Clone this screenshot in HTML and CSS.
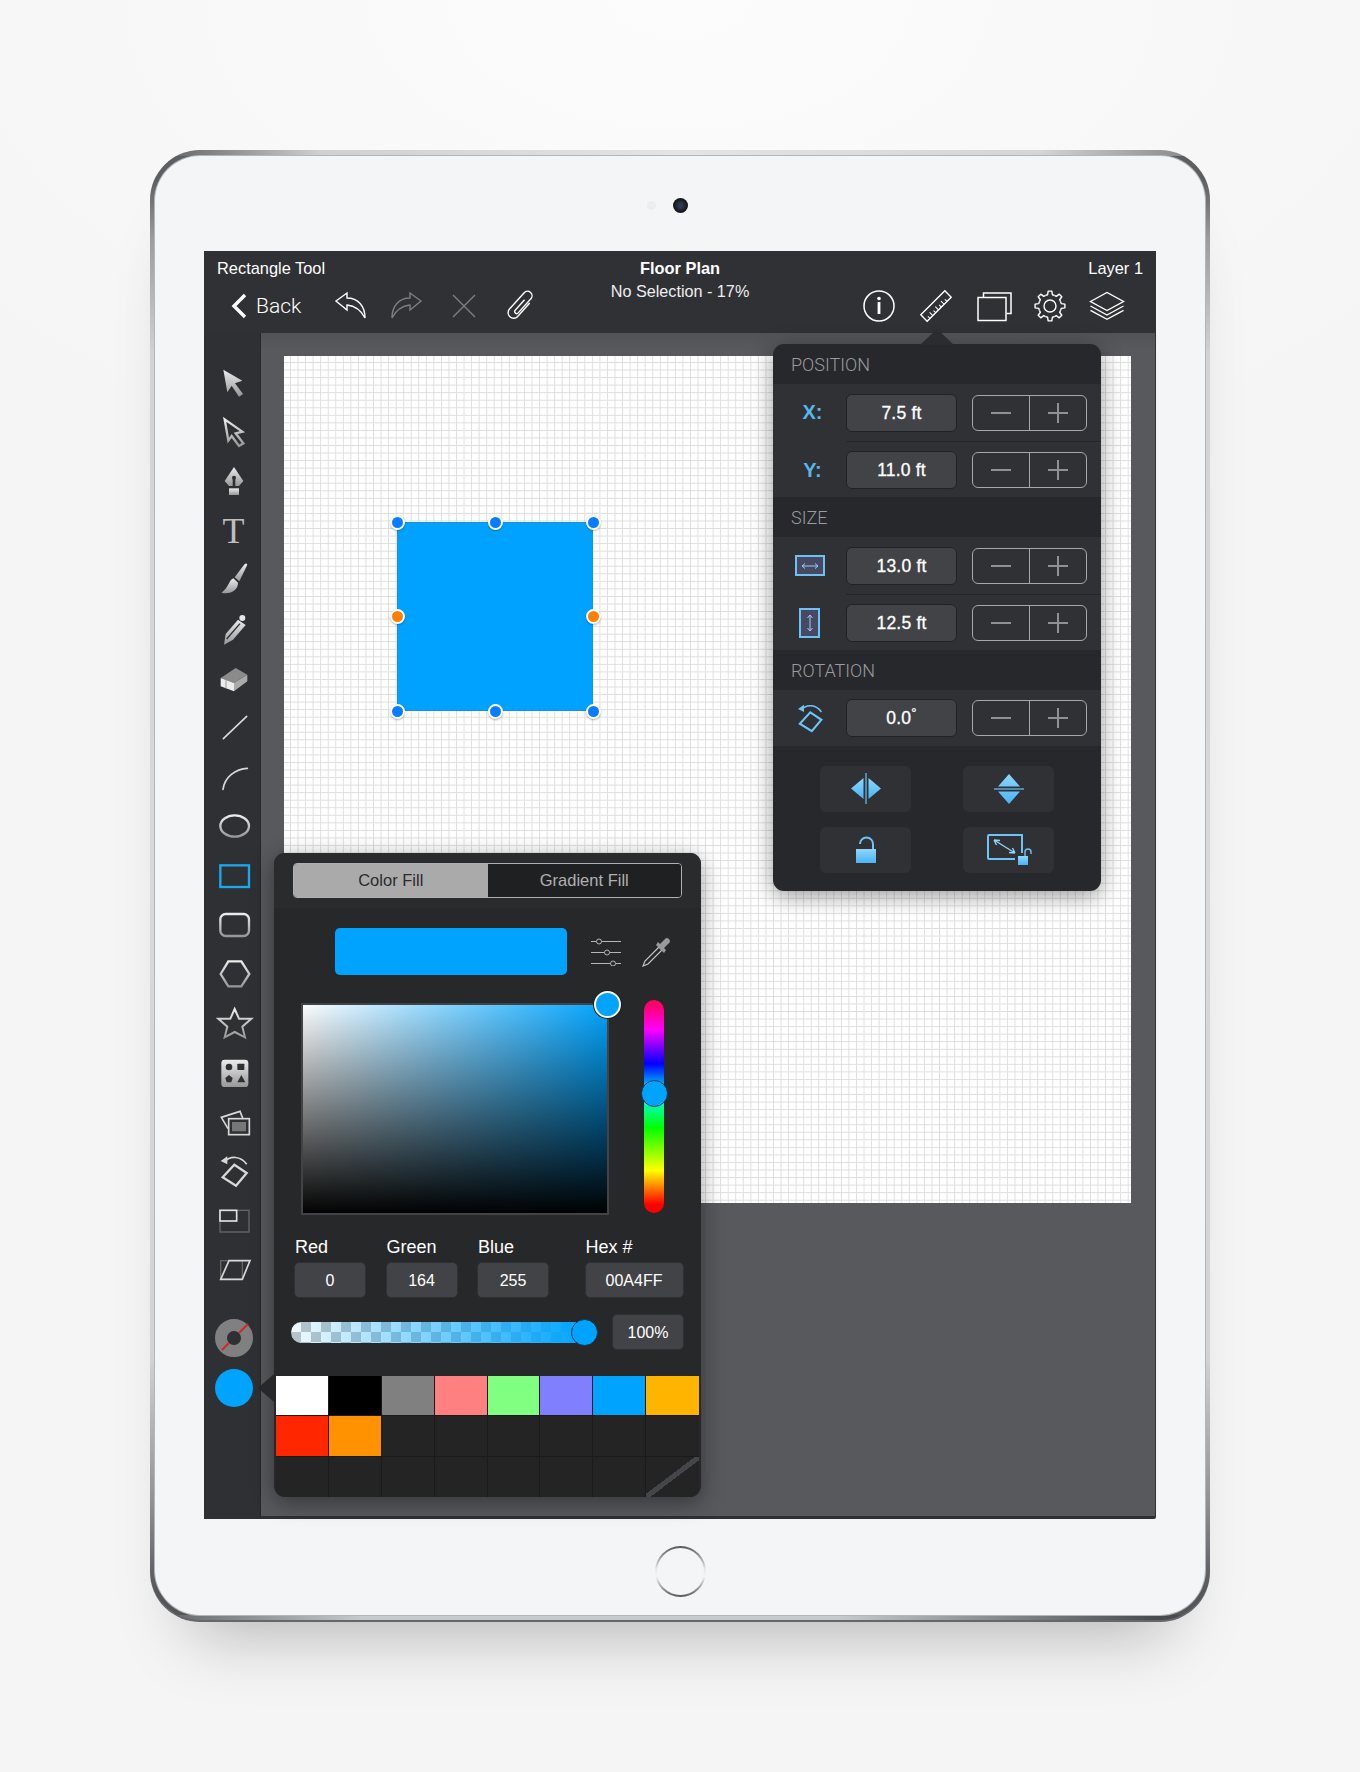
FILE: index.html
```html
<!DOCTYPE html>
<html lang="en">
<head>
    <meta charset="UTF-8">
    <title>Floor Plan</title>
    <link rel="stylesheet" href="styles.css">
</head>
<body>
    <svg class="defs" width="0" height="0">
        <defs>
            <linearGradient id="metal" x1="0" y1="0" x2="0" y2="1">
                <stop offset="0" stop-color="#ececec"/>
                <stop offset="1" stop-color="#979797"/>
            </linearGradient>
            <linearGradient id="sky" x1="0" y1="0" x2="0" y2="1">
                <stop offset="0" stop-color="#8ed6fb"/>
                <stop offset="1" stop-color="#49b4f5"/>
            </linearGradient>
            <symbol id="rotate-icon" viewBox="4 4 120 120">
                <path d="M65 45 L102 70 L70 108 L30 83 Z" fill="none" stroke="currentColor" stroke-width="7"/>
                <path d="M36 36 C52 18 84 18 102 44" fill="none" stroke="currentColor" stroke-width="5"/>
                <path d="M24 34 L44 20 L44 44 Z" fill="currentColor"/>
            </symbol>
            <path id="gear-tooth" d="M15.6 9.4 L17.6 8.75 L18.17 5.11 H21.83 L22.4 8.75 L24.4 9.4"/>
        </defs>
    </svg>

    <div class="tablet">
        <div class="tablet-face">
            <div class="camera-row">
                <span class="sensor"></span>
                <span class="camera"></span>
            </div>

            <div class="screen">
                <header class="topbar">
                    <div class="topbar-left">
                        <div class="bar-title">Rectangle Tool</div>
                        <div class="tools">
                            <button class="back">
                                <svg width="16" height="26" viewBox="0 0 16 26"><path d="M14 2 L3 13 L14 24" fill="none" stroke="#fff" stroke-width="3.4"/></svg>
                                <span>Back</span>
                            </button>
                            <span class="tool">
                                <svg width="40" height="40" viewBox="0 0 40 40"><path d="M6 15 L17 7 V12 C28 12 35 20 35 32 C31 24 26 20 17 19 V24 Z" fill="none" stroke="#fff" stroke-width="1.4"/></svg>
                            </span>
                            <span class="tool">
                                <svg width="40" height="40" viewBox="0 0 40 40"><path d="M34 15 L23 7 V12 C12 12 5 20 5 32 C9 24 14 20 23 19 V24 Z" fill="none" stroke="#7d7e82" stroke-width="1.4"/></svg>
                            </span>
                            <span class="tool">
                                <svg width="40" height="40" viewBox="0 0 40 40"><path d="M9 9 L31 31 M31 9 L9 31" stroke="#7d7e82" stroke-width="1.4"/></svg>
                            </span>
                            <span class="tool">
                                <svg width="40" height="40" viewBox="0 0 40 40"><path transform="rotate(42 20 20)" d="M24.5 12 V30 a5.5 5.5 0 0 1 -11 0 V8 a4.5 4.5 0 0 1 9 0 V27 a2 2 0 0 1 -4 0 V13" fill="none" stroke="#fff" stroke-width="1.4"/></svg>
                            </span>
                        </div>
                    </div>

                    <div class="topbar-center">
                        <div class="bar-title bold">Floor Plan</div>
                        <div class="subtitle">No Selection - 17%</div>
                    </div>

                    <div class="topbar-right">
                        <div class="bar-title">Layer 1</div>
                        <div class="tools right">
                            <span class="tool">
                                <svg width="40" height="40" viewBox="0 0 40 40"><circle cx="20" cy="20" r="15" fill="none" stroke="#fff" stroke-width="1.5"/><rect x="18.6" y="16" width="2.8" height="12" fill="#fff"/><circle cx="20" cy="12.5" r="1.8" fill="#fff"/></svg>
                            </span>
                            <span class="tool">
                                <svg width="40" height="40" viewBox="0 0 40 40"><g transform="rotate(-45 20 20)" fill="none" stroke="#fff" stroke-width="1.4"><rect x="3" y="15.5" width="34" height="9"/><path d="M7 24.5 v-3 M11 24.5 v-4.5 M15 24.5 v-3 M19 24.5 v-4.5 M23 24.5 v-3 M27 24.5 v-4.5 M31 24.5 v-3" stroke-width="1"/></g></svg>
                            </span>
                            <span class="tool">
                                <svg width="40" height="40" viewBox="0 0 40 40"><rect x="5" y="11.5" width="28" height="23" fill="none" stroke="#fff" stroke-width="1.5"/><path d="M10.5 11 V7 H38 V27.5 H33.5" fill="none" stroke="#fff" stroke-width="1.5"/></svg>
                            </span>
                            <span class="tool">
                                <svg width="40" height="40" viewBox="0 0 40 40"><g fill="none" stroke="#fff" stroke-width="1.4" stroke-linejoin="round"><use href="#gear-tooth"/><use href="#gear-tooth" transform="rotate(45 20 20)"/><use href="#gear-tooth" transform="rotate(90 20 20)"/><use href="#gear-tooth" transform="rotate(135 20 20)"/><use href="#gear-tooth" transform="rotate(180 20 20)"/><use href="#gear-tooth" transform="rotate(225 20 20)"/><use href="#gear-tooth" transform="rotate(270 20 20)"/><use href="#gear-tooth" transform="rotate(315 20 20)"/><circle cx="20" cy="20" r="6"/></g></svg>
                            </span>
                            <span class="tool">
                                <svg width="40" height="40" viewBox="0 0 40 40"><g fill="none" stroke="#fff" stroke-width="1.4"><path d="M3.5 15.5 L20 6.5 L36.5 15.5 L20 24.5 Z"/><path d="M3.5 20 L20 29 L36.5 20"/><path d="M3.5 24.3 L20 33.3 L36.5 24.3"/></g></svg>
                            </span>
                        </div>
                    </div>
                </header>

                <div class="workspace">
                    <aside class="sidebar">
                        <div class="side-tool"><svg viewBox="0 0 120 120"><path d="M28 20 L85 53 L63 61 L87 93 L75 101 L53 68 L40 88 Z" fill="url(#metal)"/></svg></div>
                        <div class="side-tool"><svg viewBox="0 0 120 120"><path d="M32 22 L85 59 L65 64 L88 94 L75 102 L53 72 L43 86 Z" fill="none" stroke="url(#metal)" stroke-width="7"/></svg></div>
                        <div class="side-tool"><svg viewBox="0 0 120 120"><g transform="translate(0 10)"><path d="M60 8 L88 50 L75 65 H64 V42 H56 V65 H45 L32 50 Z" fill="url(#metal)"/><circle cx="60" cy="40" r="6" fill="#2f3034"/><rect x="45" y="72" width="30" height="20" fill="url(#metal)"/></g></svg></div>
                        <div class="side-tool"><span class="type-icon">T</span></div>
                        <div class="side-tool"><svg viewBox="0 0 120 120"><path d="M58 55 C44 60 44 85 22 98 C50 105 72 90 72 68 Z" fill="url(#metal)"/><path d="M62 52 L92 12 Q98 8 100 14 L76 64 Z" fill="url(#metal)"/></svg></div>
                        <div class="side-tool"><svg viewBox="0 0 120 120"><path d="M30 107 L35 75 L72 32 L95 48 L57 92 Z" fill="url(#metal)"/><path d="M38 90 L78 44" stroke="#2f3034" stroke-width="4"/><circle cx="85" cy="27" r="9" fill="#e6e6e6"/></svg></div>
                        <div class="side-tool"><svg viewBox="0 0 120 120"><g transform="translate(0 5)"><path d="M20 55 L65 25 L100 45 L60 70 Z" fill="#8b8b8b"/><path d="M20 55 L60 70 V95 L20 80 Z" fill="#ececec"/><path d="M60 70 L100 45 V65 L60 95 Z" fill="#aaa"/><path d="M36 62 V86" stroke="#999" stroke-width="3"/></g></svg></div>
                        <div class="side-tool"><svg viewBox="0 0 120 120"><path d="M28 92 L98 25" stroke="#d8d8d8" stroke-width="5" stroke-linecap="round"/></svg></div>
                        <div class="side-tool"><svg viewBox="0 0 120 120"><path d="M27 97 C32 59 65 36 100 34" fill="none" stroke="#d8d8d8" stroke-width="5" stroke-linecap="round"/></svg></div>
                        <div class="side-tool"><svg viewBox="0 0 120 120"><ellipse cx="62" cy="60" rx="43" ry="32" fill="none" stroke="url(#metal)" stroke-width="7"/></svg></div>
                        <div class="side-tool"><svg viewBox="0 0 120 120"><rect x="19" y="28" width="86" height="65" fill="none" stroke="#19a9ee" stroke-width="7"/></svg></div>
                        <div class="side-tool"><svg viewBox="0 0 120 120"><rect x="19" y="27" width="86" height="66" rx="16" fill="none" stroke="url(#metal)" stroke-width="7"/></svg></div>
                        <div class="side-tool"><svg viewBox="0 0 120 120"><path d="M20 60 L43 22 H82 L106 60 L82 97 H43 Z" fill="none" stroke="url(#metal)" stroke-width="7"/></svg></div>
                        <div class="side-tool"><svg viewBox="0 0 120 120"><path d="M62 15 L75 44 L112 44 L85 68 L93 100 L62 84 L32 100 L40 68 L13 44 L49 44 Z" fill="none" stroke="url(#metal)" stroke-width="6"/></svg></div>
                        <div class="side-tool"><svg viewBox="0 0 120 120"><rect x="22" y="20" width="81" height="82" rx="10" fill="url(#metal)"/><circle cx="45" cy="42" r="10" fill="#2f3034"/><rect x="70" y="32" width="21" height="19" rx="2" fill="#2f3034"/><path d="M45 66 L56 75 L52 88 H38 L34 75 Z" fill="#2f3034"/><path d="M82 66 L94 88 H70 Z" fill="#2f3034"/></svg></div>
                        <div class="side-tool"><svg viewBox="0 0 120 120"><path d="M42 80 L22 46 L78 28 L86 48" fill="none" stroke="#d8d8d8" stroke-width="5"/><rect x="44" y="50" width="62" height="48" fill="none" stroke="#d8d8d8" stroke-width="5"/><rect x="54" y="60" width="42" height="28" fill="#777"/></svg></div>
                        <div class="side-tool metal-text"><svg viewBox="0 0 120 120"><use href="#rotate-icon" width="120" height="120"/></svg></div>
                        <div class="side-tool"><svg viewBox="0 0 120 120"><rect x="18" y="28" width="87" height="65" fill="none" stroke="#666" stroke-width="4"/><rect x="18" y="28" width="50" height="32" fill="#2f3034" stroke="#e0e0e0" stroke-width="5"/></svg></div>
                        <div class="side-tool"><svg viewBox="0 0 120 120"><rect x="20" y="32" width="65" height="56" fill="none" stroke="#666" stroke-width="4"/><path d="M45 32 H108 L85 88 H20 Z" fill="none" stroke="#d8d8d8" stroke-width="5"/></svg></div>

                        <div class="side-colors">
                            <svg class="stroke-well" viewBox="0 0 38 38">
                                <circle cx="19" cy="19" r="13" fill="none" stroke="#808080" stroke-width="12"/>
                                <circle cx="19" cy="19" r="6.5" fill="#2f3034"/>
                                <path d="M7 31 L14 24 M24 14 L33 5" stroke="#d8232a" stroke-width="2"/>
                            </svg>
                            <span class="fill-well"></span>
                        </div>
                    </aside>

                    <main class="main-area">
                        <div class="canvas">
                            <div class="shape">
                                <span class="handle h-tl"></span>
                                <span class="handle h-tc"></span>
                                <span class="handle h-tr"></span>
                                <span class="handle orange h-ml"></span>
                                <span class="handle orange h-mr"></span>
                                <span class="handle h-bl"></span>
                                <span class="handle h-bc"></span>
                                <span class="handle h-br"></span>
                            </div>
                        </div>
                    </main>
                </div>

                <!-- inspector popover -->
                <section class="inspector">
                    <div class="section-head">POSITION</div>
                    <div class="rows">
                        <div class="row">
                            <span class="row-label">X:</span>
                            <span class="field">7.5 ft</span>
                            <span class="stepper"><span class="minus"></span><span class="plus"></span></span>
                        </div>
                        <div class="row">
                            <span class="row-label">Y:</span>
                            <span class="field">11.0 ft</span>
                            <span class="stepper"><span class="minus"></span><span class="plus"></span></span>
                        </div>
                    </div>
                    <div class="section-head">SIZE</div>
                    <div class="rows">
                        <div class="row">
                            <span class="row-label icon"><span class="size-box wide"><svg width="18" height="8" viewBox="0 0 18 8"><path d="M1 4 H17 M4 1.5 L1 4 L4 6.5 M14 1.5 L17 4 L14 6.5" fill="none" stroke="#8fd3f7" stroke-width="1"/></svg></span></span>
                            <span class="field">13.0 ft</span>
                            <span class="stepper"><span class="minus"></span><span class="plus"></span></span>
                        </div>
                        <div class="row">
                            <span class="row-label icon"><span class="size-box tall"><svg width="8" height="18" viewBox="0 0 8 18"><path d="M4 1 V17 M1.5 4 L4 1 L6.5 4 M1.5 14 L4 17 L6.5 14" fill="none" stroke="#8fd3f7" stroke-width="1"/></svg></span></span>
                            <span class="field">12.5 ft</span>
                            <span class="stepper"><span class="minus"></span><span class="plus"></span></span>
                        </div>
                    </div>
                    <div class="section-head">ROTATION</div>
                    <div class="rows">
                        <div class="row single">
                            <span class="row-label icon blue-icon"><svg width="36" height="36" viewBox="0 0 120 120"><use href="#rotate-icon" width="120" height="120"/></svg></span>
                            <span class="field">0.0<sup>°</sup></span>
                            <span class="stepper"><span class="minus"></span><span class="plus"></span></span>
                        </div>
                    </div>
                    <div class="actions">
                        <span class="action"><svg width="32" height="32" viewBox="0 0 32 32"><path d="M13.5 5 V26 L1 15.5 Z M18.5 5 V26 L31 15.5 Z" fill="url(#sky)"/><path d="M16 0 V31" stroke="#6cc5f5" stroke-width="1.2"/></svg></span>
                        <span class="action"><svg width="32" height="32" viewBox="0 0 32 32"><path d="M5 13.5 H27 L16 1 Z M5 18.5 H27 L16 31 Z" fill="url(#sky)"/><path d="M1 16 H31" stroke="#6cc5f5" stroke-width="1.2"/></svg></span>
                        <span class="action"><svg width="32" height="32" viewBox="0 0 32 32"><path d="M10 10 a6.5 6.5 0 0 1 13 0 V15" fill="none" stroke="#6cc5f5" stroke-width="2"/><rect x="6" y="15" width="20" height="14" fill="url(#sky)"/></svg></span>
                        <span class="action"><svg width="48" height="36" viewBox="0 0 48 36"><path d="M30 27 H4 a1 1 0 0 1 -1 -1 V4 a1 1 0 0 1 1 -1 H37 V21" fill="none" stroke="#6cc5f5" stroke-width="2"/><path d="M9 8 L30 21 M9 8 L15 8.5 M9 8 L11.5 13 M30 21 L24 20.5 M30 21 L27.5 16" fill="none" stroke="#8fd3f7" stroke-width="1.4"/><rect x="33" y="24" width="10" height="9" fill="url(#sky)"/><path d="M40 24 V20 a3 3 0 0 1 6 0 V22" fill="none" stroke="#6cc5f5" stroke-width="1.4"/></svg></span>
                    </div>
                </section>

                <!-- colour popover -->
                <section class="color-panel">
                    <div class="tab-band">
                        <div class="tabs">
                            <span class="tab active">Color Fill</span>
                            <span class="tab">Gradient Fill</span>
                        </div>
                    </div>
                    <div class="preview-row">
                        <div class="preview"></div>
                        <svg class="sliders-icon" width="30" height="28" viewBox="0 0 30 28"><g fill="#27282a" stroke="#b5b5b7" stroke-width="1"><path d="M0 3.5 H30 M0 14.5 H30 M0 25.5 H30"/><circle cx="8" cy="3.5" r="2.5"/><circle cx="16" cy="14.5" r="2.5"/><circle cx="22" cy="25.5" r="2.5"/></g></svg>
                        <svg class="dropper-icon" width="29" height="30" viewBox="0 0 29 30"><path d="M17 10 L3 24 L1 29 L6 27 L20 13 Z" fill="none" stroke="#c5c5c7" stroke-width="1.2"/><path d="M14 8 L22 16 L24 13 L22 11 L28 5 Q28 1 24 1 L18 7 L16 5 Z" fill="#9a9a9c"/></svg>
                    </div>
                    <div class="picker-row">
                        <div class="sv-box"><span class="sv-knob"></span></div>
                        <div class="hue-bar"><span class="hue-knob"></span></div>
                    </div>
                    <div class="channels">
                        <div class="channel"><label>Red</label><span class="value">0</span></div>
                        <div class="channel"><label>Green</label><span class="value">164</span></div>
                        <div class="channel"><label>Blue</label><span class="value">255</span></div>
                        <div class="channel hex"><label>Hex #</label><span class="value">00A4FF</span></div>
                    </div>
                    <div class="opacity-row">
                        <div class="opacity-bar"><span class="opacity-knob"></span></div>
                        <span class="value pct">100%</span>
                    </div>
                    <div class="swatches">
                        <span class="swatch c-white"></span>
                        <span class="swatch c-black"></span>
                        <span class="swatch c-gray"></span>
                        <span class="swatch c-pink"></span>
                        <span class="swatch c-green"></span>
                        <span class="swatch c-violet"></span>
                        <span class="swatch c-blue"></span>
                        <span class="swatch c-amber"></span>
                        <span class="swatch c-red"></span>
                        <span class="swatch c-orange"></span>
                        <span class="swatch"></span>
                        <span class="swatch"></span>
                        <span class="swatch"></span>
                        <span class="swatch"></span>
                        <span class="swatch"></span>
                        <span class="swatch"></span>
                        <span class="swatch"></span>
                        <span class="swatch"></span>
                        <span class="swatch"></span>
                        <span class="swatch"></span>
                        <span class="swatch"></span>
                        <span class="swatch"></span>
                        <span class="swatch"></span>
                        <span class="swatch slash"></span>
                    </div>
                </section>
            </div>

            <div class="home-button"></div>
        </div>
    </div>
</body>
</html>
```
FILE: styles.css
```css
* {
    box-sizing: border-box;
}

body {
    margin: 0;
    height: 1772px;
    padding-top: 150px;
    background: radial-gradient(ellipse 900px 500px at 50% 0, #fcfcfc, #f5f5f5);
    font-family: "Liberation Sans", Arial, sans-serif;
    color: #ffffff;
    overflow: hidden;
}

.defs {
    position: absolute;
}

/* tablet shell: strips for the top and bottom edge, side rims from the last layer */
.tablet {
    width: 1060px;
    height: 1472px;
    margin: 0 auto;
    padding: 6px 5px 7px;
    border-radius: 50px;
    background:
        linear-gradient(to right, #6d6e71 3%, #cfd0d1 16%, #e4e4e5 50%, #d4d5d6 84%, #8d8e91 97%) top / 100% 6px no-repeat,
        linear-gradient(to right, #6d6e71 3%, #c8c9ca 20%, #c8c9ca 65%, #4a4b4e 95%) bottom / 100% 7px no-repeat,
        linear-gradient(#5d5e61 2%, #9b9c9e 6%, #d2d3d3 14%, #d8d9d9 50%, #d2d3d3 82%, #8f9092 92%, #55565a 98%);
    box-shadow: inset 0 -2px 0 #66676a, 0 50px 70px -40px rgba(0, 0, 0, 0.28);
}

.tablet-face {
    height: 100%;
    border-radius: 45px;
    background-color: #f4f5f7;
    box-shadow: 0 0 0 1px #b4b5b7;
    display: flex;
    flex-direction: column;
    align-items: center;
}

.camera-row {
    height: 95px;
    width: 100%;
    display: flex;
    align-items: center;
    justify-content: center;
    padding: 3px 26px 0 0;
    gap: 17px;
}

.sensor {
    width: 9px;
    height: 9px;
    border-radius: 50%;
    background-color: #ecedef;
}

.camera {
    width: 15px;
    height: 15px;
    border-radius: 50%;
    background: radial-gradient(circle, #2f3a52 15%, #16181d 60%);
}

.home-button {
    width: 51px;
    height: 51px;
    margin-top: 27px;
    border-radius: 50%;
    background: linear-gradient(#55565a, #e8e8e8 45%, #f4f4f4 60%, #55565a) border-box;
    position: relative;
}

.home-button::after {
    content: "";
    display: block;
    margin: 2px;
    width: 47px;
    height: 47px;
    border-radius: 50%;
    background-color: #f4f5f7;
}

/* screen */
.screen {
    position: relative;
    width: 952px;
    height: 1268px;
    flex-shrink: 0;
    background-color: #2f3034;
    border-radius: 2px;
    display: flex;
    flex-direction: column;
}

.topbar {
    height: 82px;
    display: grid;
    grid-template-columns: 1fr auto 1fr;
    background-color: #303135;
    flex-shrink: 0;
}

.bar-title {
    font-size: 16.4px;
    line-height: 17px;
    padding-top: 9px;
}

.topbar-left .bar-title {
    padding-left: 13px;
}

.topbar-right .bar-title {
    padding-right: 13px;
    text-align: right;
}

.bar-title.bold {
    font-weight: bold;
}

.topbar-center {
    text-align: center;
}

.subtitle {
    font-size: 16.2px;
    line-height: 17px;
    margin-top: 6px;
    color: #eeeeee;
}

.tools {
    display: flex;
    align-items: center;
    height: 40px;
    margin-top: 9px;
}

.tools.right {
    justify-content: flex-end;
    padding-right: 21px;
}

.back {
    display: flex;
    align-items: center;
    gap: 9px;
    width: 117px;
    padding: 0 0 0 27px;
    border: none;
    background: none;
    color: #ffffff;
    font-family: Roboto, sans-serif;
    font-weight: 300;
    font-size: 21px;
}

.tool {
    width: 57px;
    display: flex;
    justify-content: center;
}

.workspace {
    flex: 1;
    display: flex;
    min-height: 0;
}

.sidebar {
    width: 57px;
    padding: 25px 0 0 3px;
    flex-shrink: 0;
    background-color: #2f3034;
    display: flex;
    flex-direction: column;
    align-items: center;
    border-right: 1px solid #26272a;
}

.side-tool {
    width: 40px;
    height: 49.3px;
    flex-shrink: 0;
    display: flex;
    align-items: center;
    justify-content: center;
}

.side-tool svg {
    width: 40px;
    height: 40px;
}

.metal-text {
    color: #d8d8d8;
}

.type-icon {
    font-family: "Liberation Serif", serif;
    font-size: 36px;
    line-height: 40px;
    color: #bdbdbd;
}

.side-colors {
    margin-top: 24px;
    display: flex;
    flex-direction: column;
    align-items: center;
    gap: 12px;
}

.stroke-well {
    width: 38px;
    height: 38px;
}

.fill-well {
    width: 38px;
    height: 38px;
    border-radius: 50%;
    background-color: #00a4ff;
}

.main-area {
    flex: 1;
    padding: 23px 0 0 23px;
    margin-bottom: 3px;
    margin-right: 1px;
    background: linear-gradient(#525357, #58595d 18px);
}

/* drawing canvas, grid cells are drawn by the background */
.canvas {
    position: relative;
    width: 847px;
    height: 847px;
    background-color: #ffffff;
    background-image:
        linear-gradient(to right, #dedede 1.2px, transparent 1.2px),
        linear-gradient(to bottom, #dedede 1.2px, transparent 1.2px);
    background-size: 7.55px 7.55px;
    background-position: 6px 6px;
}

.shape {
    position: absolute;
    left: 113px;
    top: 166px;
    width: 196px;
    height: 189px;
    background-color: #00a2ff;
    box-shadow: inset 0 0 0 1px #1c8de0;
}

.handle {
    position: absolute;
    width: 15px;
    height: 15px;
    margin: -7.5px 0 0 -7.5px;
    border-radius: 50%;
    background-color: #0a7dff;
    border: 2px solid #ffffff;
    box-shadow: 0 1px 2px rgba(0, 0, 0, 0.3);
}

.handle.orange {
    background-color: #ff8000;
}

.h-tl { left: 0; top: 0; }
.h-tc { left: 50%; top: 0; }
.h-tr { left: 100%; top: 0; }
.h-ml { left: 0; top: 50%; }
.h-mr { left: 100%; top: 50%; }
.h-bl { left: 0; top: 100%; }
.h-bc { left: 50%; top: 100%; }
.h-br { left: 100%; top: 100%; }

/* inspector popover */
.inspector {
    position: absolute;
    left: 569px;
    top: 93px;
    width: 328px;
    height: 547px;
    background-color: #27282b;
    border-radius: 11px;
    box-shadow: 0 5px 22px rgba(0, 0, 0, 0.4);
}

.inspector::before {
    content: "";
    position: absolute;
    left: 147px;
    top: -15px;
    width: 0;
    height: 0;
    border-left: 17px solid transparent;
    border-right: 17px solid transparent;
    border-bottom: 16px solid #2b2c2f;
}

.section-head {
    height: 40px;
    padding: 11px 0 0 18px;
    font-family: Roboto, sans-serif;
    font-weight: 300;
    font-size: 18px;
    line-height: 20px;
    color: #9a9b9d;
}

.rows {
    background-color: #303135;
}

.row {
    height: 57px;
    display: flex;
    align-items: center;
}

.row.single {
    height: 56px;
}

.row + .row {
    height: 56px;
    padding-top: 2px;
    background: linear-gradient(#25262a, #25262a) 73px 0 / 100% 1px no-repeat;
}

.row-label {
    width: 73px;
    padding-left: 6px;
    display: flex;
    justify-content: center;
    font-size: 20px;
    font-weight: bold;
    color: #56b7ea;
}

.row-label.icon {
    padding-left: 0;
}

.blue-icon {
    color: #6cc5f5;
}

.size-box {
    display: flex;
    align-items: center;
    justify-content: center;
    border: 2px solid #6cc3f2;
    background-color: #474862;
}

.size-box.wide {
    width: 30px;
    height: 21px;
}

.size-box.tall {
    width: 21px;
    height: 30px;
}

.field {
    width: 111px;
    height: 38px;
    line-height: 36px;
    text-align: center;
    font-size: 17.5px;
    letter-spacing: 0.2px;
    background-color: #424346;
    border: 1px solid #212225;
    border-radius: 6px;
    -webkit-text-stroke: 0.3px #ffffff;
}

.field sup {
    font-size: 13px;
    line-height: 0;
}

.stepper {
    width: 115px;
    height: 36px;
    margin-left: 15px;
    display: flex;
    border: 1px solid #a6a7a9;
    border-radius: 6px;
}

.minus,
.plus {
    position: relative;
    flex: 1;
}

.plus {
    border-left: 1px solid #a6a7a9;
}

.minus::before,
.plus::before,
.plus::after {
    content: "";
    position: absolute;
    left: 50%;
    top: 50%;
    width: 20px;
    height: 2px;
    margin: -1px 0 0 -10px;
    background-color: #8f9092;
}

.plus::after {
    width: 2px;
    height: 20px;
    margin: -10px 0 0 -1px;
}

.actions {
    display: grid;
    grid-template-columns: 91px 91px;
    grid-auto-rows: 46px;
    column-gap: 52px;
    row-gap: 15px;
    padding: 20px 0 0 47px;
}

.action {
    display: flex;
    align-items: center;
    justify-content: center;
    background-color: #303135;
    border-radius: 6px;
}

/* colour popover */
.color-panel {
    position: absolute;
    left: 70px;
    top: 602px;
    width: 427px;
    height: 644px;
    background-color: #27282a;
    border-radius: 11px;
    box-shadow: 0 5px 22px rgba(0, 0, 0, 0.4);
}

.color-panel::before {
    content: "";
    position: absolute;
    left: -16px;
    top: 521px;
    width: 0;
    height: 0;
    border-top: 14px solid transparent;
    border-bottom: 14px solid transparent;
    border-right: 16px solid #27282a;
}

.tab-band {
    height: 55px;
    padding: 10px 0 0 19px;
    background-color: #2a2b2d;
    border-radius: 11px 11px 0 0;
}

.tabs {
    width: 389px;
    height: 35px;
    display: flex;
    border: 1.5px solid #b0b0b2;
    border-radius: 4px;
    overflow: hidden;
}

.tab {
    width: 194.5px;
    line-height: 32px;
    text-align: center;
    font-size: 16.5px;
    color: #b0b0b2;
    background-color: #1f2022;
}

.tab.active {
    color: #2a2b2d;
    background-color: #aaaaaa;
}

.preview-row {
    height: 47px;
    margin-top: 20px;
    padding-left: 61px;
    display: flex;
    align-items: center;
}

.preview {
    width: 232px;
    height: 47px;
    background-color: #00a4ff;
    border-radius: 5px;
}

.sliders-icon {
    margin-left: 24px;
}

.dropper-icon {
    margin-left: 21px;
}

.picker-row {
    display: flex;
    align-items: flex-start;
    margin-top: 25px;
    padding-left: 27px;
}

.sv-box {
    position: relative;
    width: 308px;
    height: 212px;
    margin-top: 3px;
    border: 2px solid #424346;
    background:
        linear-gradient(to top, #000000, rgba(0, 0, 0, 0)),
        linear-gradient(to right, #ffffff, #00a4ff);
    background-origin: border-box;
}

.sv-knob {
    position: absolute;
    right: -14px;
    top: -14px;
    width: 27px;
    height: 27px;
    border-radius: 50%;
    background-color: #00a4ff;
    border: 2.5px solid #ffffff;
    box-shadow: 0 0 0 1px #1c1d1f;
}

.hue-bar {
    position: relative;
    width: 20px;
    height: 213px;
    margin-left: 35px;
    border-radius: 10px;
    background: linear-gradient(#ff0066 2%, #ff00ff 14%, #0000ff 30%, #00ffff 44%, #00ff00 60%, #ffff00 80%, #ff0000 96%);
}

.hue-knob {
    position: absolute;
    left: -3.5px;
    top: 80px;
    width: 27px;
    height: 27px;
    border-radius: 50%;
    background-color: #00a4ff;
    border: 1px solid #17344a;
}

.channels {
    display: flex;
    margin: 22px 0 0 20px;
    gap: 19.5px;
}

.channel {
    width: 72px;
}

.channel.hex {
    width: 99px;
    margin-left: 16px;
}

.channel label {
    display: block;
    font-size: 18px;
    line-height: 20px;
    margin: 0 0 5px 1px;
}

.value {
    display: block;
    height: 36px;
    line-height: 35px;
    text-align: center;
    font-size: 16px;
    background-color: #424346;
    border: 1px solid #2f3033;
    border-radius: 5px;
}

.opacity-row {
    display: flex;
    align-items: center;
    margin: 16px 0 0 17px;
}

.opacity-bar {
    position: relative;
    width: 306px;
    height: 21px;
    border-radius: 11px;
    background:
        linear-gradient(to right, rgba(0, 164, 255, 0.06), #00a4ff 96%),
        repeating-conic-gradient(#c6c6c6 0 25%, #ffffff 0 50%) 0 0 / 20px 20px;
}

.opacity-knob {
    position: absolute;
    right: -0.5px;
    top: -3px;
    width: 27px;
    height: 27px;
    border-radius: 50%;
    background-color: #00a4ff;
    border: 1px solid #17344a;
}

.value.pct {
    width: 72px;
    margin-left: 15px;
}

.swatches {
    display: grid;
    grid-template-columns: repeat(8, 1fr);
    grid-template-rows: repeat(3, 40.33px);
    width: 423px;
    margin: 26px 0 0 2px;
    border-radius: 0 0 9px 9px;
    overflow: hidden;
    background-color: #242425;
}

.swatch {
    border-right: 1px solid #1b1b1c;
    border-bottom: 1px solid #1b1b1c;
}

.swatch:nth-child(8n) {
    border-right: none;
}

.swatch:nth-last-child(-n+8) {
    border-bottom: none;
}

.c-white { background-color: #ffffff; }
.c-black { background-color: #000000; }
.c-gray { background-color: #808080; }
.c-pink { background-color: #ff8080; }
.c-green { background-color: #80ff80; }
.c-violet { background-color: #8080ff; }
.c-blue { background-color: #00a4ff; }
.c-amber { background-color: #ffb400; }
.c-red { background-color: #ff2600; }
.c-orange { background-color: #ff9200; }

.swatch.slash {
    background: linear-gradient(to bottom right, transparent 46%, #454649 46%, #454649 54%, transparent 54%);
}
```
